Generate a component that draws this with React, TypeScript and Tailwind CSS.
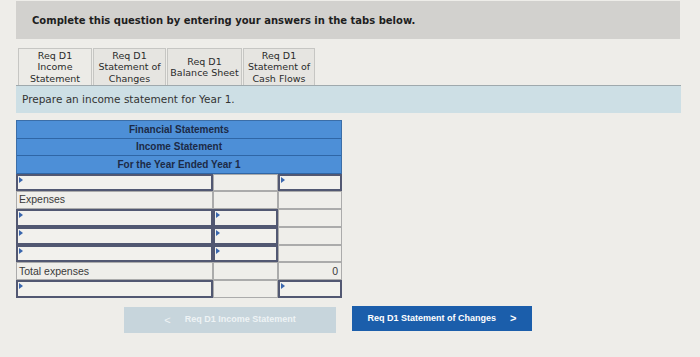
import type { ReactNode } from 'react';

type Cell = { kind: 'input' } | { kind: 'plain'; text?: string; align?: 'left' | 'right' };

const rows: Cell[][] = [
  [{ kind: 'input' }, { kind: 'plain' }, { kind: 'input' }],
  [{ kind: 'plain', text: 'Expenses' }, { kind: 'plain' }, { kind: 'plain' }],
  [{ kind: 'input' }, { kind: 'input' }, { kind: 'plain' }],
  [{ kind: 'input' }, { kind: 'input' }, { kind: 'plain' }],
  [{ kind: 'input' }, { kind: 'input' }, { kind: 'plain' }],
  [{ kind: 'plain', text: 'Total expenses' }, { kind: 'plain' }, { kind: 'plain', text: '0', align: 'right' }],
  [{ kind: 'input' }, { kind: 'plain' }, { kind: 'input' }],
];

const widths = ['w-[197px]', 'w-[65px]', 'w-[64px]'];

const tabs = [
  ['Req D1', 'Income', 'Statement'],
  ['Req D1', 'Statement of', 'Changes'],
  ['Req D1', 'Balance Sheet'],
  ['Req D1', 'Statement of', 'Cash Flows'],
];

const tabWidths = ['w-[74px]', 'w-[73px]', 'w-[75px]', 'w-[72px]'];

function HeaderRow({ children }: { children: ReactNode }) {
  return (
    <div className="h-[17.5px] flex items-center justify-center border-b border-[#2f66a6] text-[10px] font-bold text-[#1c2a46]">
      {children}
    </div>
  );
}

function TableCell({ cell, width }: { cell: Cell; width: string }) {
  if (cell.kind === 'input') {
    return (
      <div className={`${width} h-full relative border-2 border-[#525872] bg-[#f2f1ed]`}>
        <div className="absolute top-[1px] left-[1px] w-0 h-0 border-t-[3px] border-b-[3px] border-l-[4px] border-t-transparent border-b-transparent border-l-[#3a66ad]" />
      </div>
    );
  }
  return (
    <div
      className={`${width} h-full flex items-center px-[2px] border border-[#ababab] bg-[#efeeea] text-[10.5px] text-[#3a3a3a] ${
        cell.align === 'right' ? 'justify-end pr-[3px]' : ''
      }`}
    >
      {cell.text}
    </div>
  );
}

export default function App() {
  return (
    <div className="w-[700px] h-[357px] bg-[#eeede9] overflow-hidden pt-[1px]" style={{ fontFamily: '"Liberation Sans", Arial, sans-serif' }}>
      {/* instructions banner */}
      <div className="ml-[16px] w-[664px] h-[38px] bg-[#d2d1ce] flex items-center pl-[16px] pt-[1px]">
        <p className="text-[10px] font-bold text-[#1e1e1e]" style={{ fontFamily: '"DejaVu Sans", Verdana, sans-serif' }}>
          Complete this question by entering your answers in the tabs below.
        </p>
      </div>

      {/* tabs */}
      <div className="ml-[18px] mt-[9px] flex gap-[1px] items-end" style={{ fontFamily: '"DejaVu Sans", Verdana, sans-serif' }}>
        {tabs.map((t, i) => (
          <div
            key={i}
            className={`${tabWidths[i]} h-[37px] flex flex-col items-center justify-center border border-b-0 border-[#c6c6c3] leading-[11.5px] text-[9.5px] text-[#2b2b2b] ${
              i === 0 ? 'bg-[#ecebe7]' : 'bg-[#e6e5e1]'
            }`}
          >
            {t.map((line) => (
              <span key={line}>{line}</span>
            ))}
          </div>
        ))}
      </div>

      {/* prompt bar */}
      <div className="ml-[16px] w-[665px] h-[28px] bg-[#cddfe5] border-t border-[#9fa9ad] flex items-center pl-[6px]">
        <p className="text-[10.5px] text-[#333]" style={{ fontFamily: '"DejaVu Sans", Verdana, sans-serif' }}>
          Prepare an income statement for Year 1.
        </p>
      </div>

      {/* statement table */}
      <div className="ml-[16px] mt-[7px] w-[326px]">
        <div className="bg-[#4d8fd7] border border-[#3b6ea8] border-b-0">
          <HeaderRow>Financial Statements</HeaderRow>
          <HeaderRow>Income Statement</HeaderRow>
          <HeaderRow>For the Year Ended Year 1</HeaderRow>
        </div>
        {rows.map((row, r) => (
          <div key={r} className="h-[17.8px] flex">
            {row.map((cell, c) => (
              <TableCell key={c} cell={cell} width={widths[c]} />
            ))}
          </div>
        ))}
      </div>

      {/* nav buttons */}
      <div className="flex items-start mt-[8px]">
        <button className="ml-[124px] w-[212px] h-[26px] mt-[1px] bg-[#c7d5dc] flex items-center justify-center gap-[14px] text-[9px] font-bold text-[#eef3f5]">
          <span className="text-[11px] font-normal">&lt;</span>
          <span>Req D1 Income Statement</span>
        </button>
        <button className="ml-[16px] w-[180px] h-[25px] bg-[#1b5eab] flex items-center justify-center gap-[14px] text-[9px] font-bold text-white">
          <span>Req D1 Statement of Changes</span>
          <span className="text-[11px]">&gt;</span>
        </button>
      </div>
    </div>
  );
}
